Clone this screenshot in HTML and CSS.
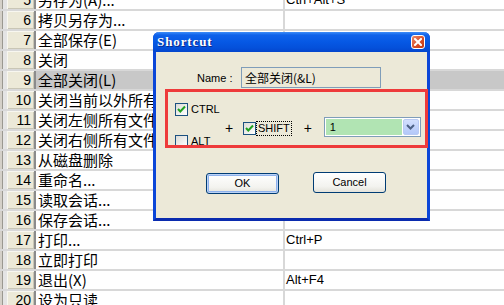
FILE: index.html
```
<!DOCTYPE html>
<html>
<head>
<meta charset="utf-8">
<link rel="stylesheet" href="styles.css">
</head>
<body>
<div class="sheet">
  <div class="row"><div class="gut"></div><div class="hdr">5</div><div class="name">另存为(A)...</div><div class="key">Ctrl+Alt+S</div></div>
  <div class="row"><div class="gut"></div><div class="hdr">6</div><div class="name">拷贝另存为...</div><div class="key"></div></div>
  <div class="row"><div class="gut"></div><div class="hdr">7</div><div class="name">全部保存(E)</div><div class="key"></div></div>
  <div class="row"><div class="gut"></div><div class="hdr">8</div><div class="name">关闭</div><div class="key"></div></div>
  <div class="row sel"><div class="gut"></div><div class="hdr">9</div><div class="name">全部关闭(L)</div><div class="key"></div></div>
  <div class="row"><div class="gut"></div><div class="hdr">10</div><div class="name">关闭当前以外所有文件</div><div class="key"></div></div>
  <div class="row"><div class="gut"></div><div class="hdr">11</div><div class="name">关闭左侧所有文件</div><div class="key"></div></div>
  <div class="row"><div class="gut"></div><div class="hdr">12</div><div class="name">关闭右侧所有文件</div><div class="key"></div></div>
  <div class="row"><div class="gut"></div><div class="hdr">13</div><div class="name">从磁盘删除</div><div class="key"></div></div>
  <div class="row"><div class="gut"></div><div class="hdr">14</div><div class="name">重命名...</div><div class="key"></div></div>
  <div class="row"><div class="gut"></div><div class="hdr">15</div><div class="name">读取会话...</div><div class="key"></div></div>
  <div class="row"><div class="gut"></div><div class="hdr">16</div><div class="name">保存会话...</div><div class="key"></div></div>
  <div class="row"><div class="gut"></div><div class="hdr">17</div><div class="name">打印...</div><div class="key">Ctrl+P</div></div>
  <div class="row"><div class="gut"></div><div class="hdr">18</div><div class="name">立即打印</div><div class="key"></div></div>
  <div class="row"><div class="gut"></div><div class="hdr">19</div><div class="name">退出(X)</div><div class="key">Alt+F4</div></div>
  <div class="row"><div class="gut"></div><div class="hdr">20</div><div class="name">设为只读</div><div class="key"></div></div>
</div>

<div class="dialog">
  <div class="titlebar">
    <span class="title">Shortcut</span>
    <span class="close"><svg width="8" height="8" viewBox="0 0 8 8"><path d="M1 1 L7 7 M7 1 L1 7" stroke="#fff" stroke-width="2" stroke-linecap="square"/></svg></span>
  </div>
  <div class="body">
    <div class="namerow">
      <span class="label">Name :</span>
      <div class="textbox">全部关闭(&amp;L)</div>
    </div>
    <div class="keys">
      <div class="mods">
        <div class="opt"><span class="cb"><svg width="11" height="11" viewBox="0 0 11 11"><path d="M2 5 L4.3 7.5 L9 2.5" fill="none" stroke="#21A121" stroke-width="2"/></svg></span><span class="optlabel">CTRL</span></div>
        <div class="opt alt"><span class="cb"></span><span class="optlabel">ALT</span></div>
      </div>
      <span class="plus p1">+</span>
      <div class="opt shift"><span class="cb"><svg width="11" height="11" viewBox="0 0 11 11"><path d="M2 5 L4.3 7.5 L9 2.5" fill="none" stroke="#21A121" stroke-width="2"/></svg></span><span class="optlabel focus">SHIFT</span></div>
      <span class="plus p2">+</span>
      <div class="combo">
        <span class="comboval">1</span>
        <span class="dropbtn"><svg width="9" height="6" viewBox="0 0 9 6"><path d="M1 1 L4.5 4.5 L8 1" fill="none" stroke="#4D6185" stroke-width="2"/></svg></span>
      </div>
    </div>
    <div class="buttons">
      <div class="btn ok">OK</div>
      <div class="btn">Cancel</div>
    </div>
  </div>
</div>

<div class="redbox"></div>
</body>
</html>
```
FILE: styles.css
```
* { box-sizing: border-box; }
html, body { margin: 0; padding: 0; }
body {
  width: 504px;
  height: 305px;
  overflow: hidden;
  background: #fff;
  position: relative;
  font-family: "Liberation Sans", Arial, sans-serif;
}
.sheet {
  margin-top: -9px;
  display: flex;
  flex-direction: column;
}
.row {
  display: flex;
  height: 20px;
  border-bottom: 2px solid #D8D8D8;
}
.gut {
  width: 7px;
  background: linear-gradient(to right, #D4D0C8 0 2px, #9A9890 2px 3px, #E4E4E4 3px);
}
.hdr {
  width: 27px;
  background: #ECE9D8;
  box-shadow: inset 1px 1px #F8F7F0, inset -1px -1px #C9C6B6;
  text-align: right;
  padding-right: 3px;
  font-size: 14px;
  line-height: 18px;
  color: #000;
}
.name {
  width: 251px;
  border-left: 2px solid #8C8C8C;
  border-right: 2px solid #D8D8D8;
  padding-left: 2px;
  font-family: "Noto Sans CJK SC", sans-serif;
  font-size: 15px;
  line-height: 18px;
  white-space: nowrap;
  overflow: hidden;
  color: #000;
}
.key {
  flex: 1;
  padding-left: 1px;
  font-size: 13px;
  line-height: 18px;
  color: #000;
}
.row.sel .name, .row.sel .key { background: #C8C8C8; }

.dialog {
  position: absolute;
  left: 153px;
  top: 32px;
  width: 277px;
  height: 189px;
  display: flex;
  flex-direction: column;
  background: #ECE9D8;
  border: 3px solid #0B46D8;
  border-top: 0;
  border-bottom-color: #0A2BAE;
  border-radius: 6px 6px 0 0;
}
.titlebar {
  height: 20px;
  margin: 0 -3px;
  padding: 0 5px 0 4px;
  display: flex;
  align-items: center;
  justify-content: space-between;
  background: linear-gradient(#3D8DF8 0, #0F62EA 3px, #0658E4 50%, #0450DA 80%, #0446CC 100%);
  border-radius: 6px 6px 0 0;
}
.title {
  color: #fff;
  font-family: "Liberation Serif", "Times New Roman", serif;
  font-weight: bold;
  font-size: 13px;
  letter-spacing: 0.9px;
  text-shadow: 1px 1px #0A2A8A;
}
.close {
  width: 14px;
  height: 14px;
  border: 1px solid #fff;
  border-radius: 3px;
  background: linear-gradient(135deg, #EB8A6C, #D54B25 60%, #C23A16);
  display: flex;
  align-items: center;
  justify-content: center;
}
.body {
  flex: 1;
  display: flex;
  flex-direction: column;
  font-size: 11px;
  color: #000;
}
.namerow {
  margin-top: 15px;
  padding-left: 41px;
  display: flex;
  align-items: center;
}
.label { width: 44px; }
.textbox {
  width: 140px;
  height: 21px;
  border: 1px solid #7F9DB9;
  padding-left: 3px;
  font-family: "Noto Sans CJK SC", sans-serif;
  font-size: 12px;
  line-height: 19px;
}
.keys {
  margin-top: 15px;
  padding-left: 19px;
  display: flex;
  align-items: flex-start;
}
.mods {
  width: 50px;
  display: flex;
  flex-direction: column;
}
.opt {
  display: flex;
  align-items: center;
  height: 13px;
}
.opt.alt { margin-top: 19px; }
.cb {
  width: 13px;
  height: 13px;
  border: 1px solid #1C5180;
  background: linear-gradient(135deg, #DCDCD7, #FFFFFF);
  display: flex;
  align-items: center;
  justify-content: center;
  flex: none;
}
.optlabel {
  margin-left: 3px;
  line-height: 13px;
}
.optlabel.focus {
  margin-left: 1px;
  padding: 0 1px;
  outline: 1px dotted #000;
}
.plus {
  font-size: 14px;
  line-height: 14px;
  width: 8px;
}
.p1 { margin-top: 18px; }
.shift { margin-top: 19px; margin-left: 10px; }
.p2 { margin-top: 18px; margin-left: 13px; }
.combo {
  margin-top: 14px;
  margin-left: 12px;
  width: 97px;
  height: 20px;
  border: 1px solid #7F9DB9;
  background: #fff;
  display: flex;
  padding: 1px;
}
.comboval {
  flex: 1;
  background: #B1E4B3;
  padding-left: 4px;
  line-height: 16px;
  font-size: 11px;
}
.dropbtn {
  width: 16px;
  height: 16px;
  margin-left: 1px;
  border-radius: 2px;
  background: linear-gradient(#D2DFFD, #B3C8F9);
  border: 1px solid #B9CAF3;
  display: flex;
  align-items: center;
  justify-content: center;
}
.buttons {
  margin-top: 24px;
  padding-left: 50px;
  display: flex;
  gap: 34px;
}
.btn {
  width: 73px;
  height: 21px;
  border: 1px solid #003C74;
  border-radius: 3px;
  background: linear-gradient(#FFFFFF, #F3F3EF 70%, #E3E2DA);
  text-align: center;
  line-height: 19px;
  font-size: 11px;
}
.btn.ok {
  box-shadow: inset 0 0 0 1px #BCD3F6, inset 0 0 0 2px #8EB1EC;
  margin-top: 1px;
}
.redbox {
  position: absolute;
  left: 165px;
  top: 89px;
  width: 263px;
  height: 59px;
  border: 3px solid #EE3B3B;
}
```
